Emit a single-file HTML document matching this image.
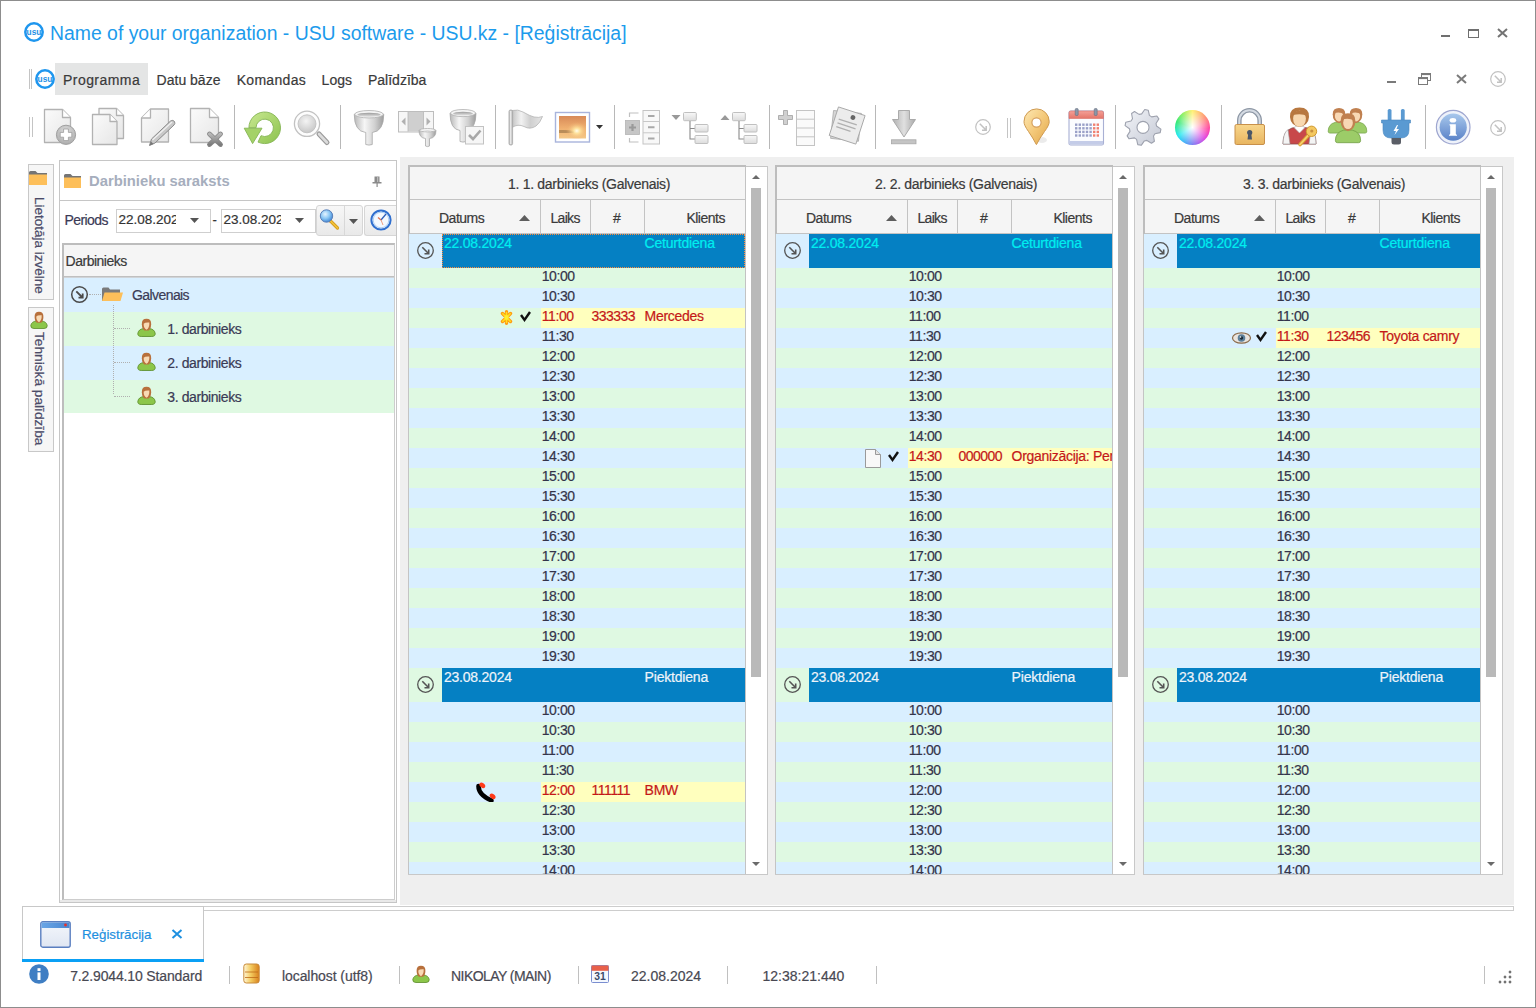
<!DOCTYPE html><html><head><meta charset="utf-8"><style>
html,body{margin:0;padding:0;}
body{width:1536px;height:1008px;overflow:hidden;position:relative;background:#fff;font-family:"Liberation Sans",sans-serif;}
.t{position:absolute;white-space:pre;line-height:1;-webkit-text-stroke:0.2px currentColor;}
.r{position:absolute;}
.s{position:absolute;overflow:visible;}
</style></head><body>
<div class="r" style="left:0;top:0;width:1534px;height:1006px;border:1px solid #8d8d8d;"></div>
<svg class="s" style="left:24px;top:22px;" width="20" height="20" viewBox="0 0 20 20"><circle cx="10.0" cy="10.0" r="8.7" fill="none" stroke="#1e96ee" stroke-width="2.5"/><text x="2.5999999999999996" y="13.2" textLength="14.8" lengthAdjust="spacingAndGlyphs" font-family="Liberation Sans" font-weight="bold" font-size="8.2" fill="#1e90e6">usu</text></svg>
<div class="t" style="left:50px;top:23.57px;font-size:19.4px;color:#1c9bec;font-weight:normal;-webkit-text-stroke:0;">Name of your organization - USU software - USU.kz - [Reģistrācija]</div>
<div class="r" style="left:1441px;top:35px;width:9px;height:2px;background:#6f6f6f;"></div>
<div class="r" style="left:1468px;top:29px;width:9px;height:6px;border:1px solid #6f6f6f;border-top-width:2px;"></div>
<svg class="s" style="left:1497px;top:28px;" width="11" height="10" viewBox="0 0 11 10"><path d="M1 1 L10 9 M10 1 L1 9" stroke="#737373" stroke-width="2"/></svg>
<div class="r" style="left:29px;top:69px;width:1px;height:20px;background:#c4c4c4;"></div>
<div class="r" style="left:31px;top:69px;width:1px;height:20px;background:#c4c4c4;"></div>
<svg class="s" style="left:35px;top:69px;" width="20" height="20" viewBox="0 0 20 20"><circle cx="10.0" cy="10.0" r="8.7" fill="none" stroke="#1e96ee" stroke-width="2.5"/><text x="2.5999999999999996" y="13.2" textLength="14.8" lengthAdjust="spacingAndGlyphs" font-family="Liberation Sans" font-weight="bold" font-size="8.2" fill="#1e90e6">usu</text></svg>
<div class="r" style="left:55px;top:63px;width:93px;height:32px;background:#e4e5e5;"></div>
<div class="t" style="left:63px;top:72.54px;font-size:14px;color:#3a3a3a;font-weight:normal;letter-spacing:0.45px;">Programma</div>
<div class="t" style="left:156.6px;top:72.54px;font-size:14px;color:#3a3a3a;font-weight:normal;">Datu bāze</div>
<div class="t" style="left:236.7px;top:72.54px;font-size:14px;color:#3a3a3a;font-weight:normal;letter-spacing:0.3px;">Komandas</div>
<div class="t" style="left:321.6px;top:72.54px;font-size:14px;color:#3a3a3a;font-weight:normal;">Logs</div>
<div class="t" style="left:368px;top:72.54px;font-size:14px;color:#3a3a3a;font-weight:normal;">Palīdzība</div>
<div class="r" style="left:1387px;top:81px;width:9px;height:2px;background:#7a7a7a;"></div>
<svg class="s" style="left:1418px;top:73px;" width="13" height="12" viewBox="0 0 13 12"><rect x="3.5" y="0.5" width="9" height="7" fill="none" stroke="#7a7a7a" stroke-width="1"/><rect x="3.5" y="0.5" width="9" height="1.6" fill="#7a7a7a"/><rect x="0.5" y="4.5" width="9" height="7" fill="#fff" stroke="#7a7a7a" stroke-width="1"/><rect x="0.5" y="4.5" width="9" height="1.6" fill="#7a7a7a"/></svg>
<svg class="s" style="left:1456px;top:74px;" width="11" height="10" viewBox="0 0 11 10"><path d="M1 1 L10 9 M10 1 L1 9" stroke="#7a7a7a" stroke-width="2"/></svg>
<svg class="s" style="left:1490px;top:71px;" width="16" height="16" viewBox="0 0 16 16"><circle cx="8.0" cy="8.0" r="7.3" fill="none" stroke="#c2c2c2" stroke-width="1.2"/><path d="M4.8 4.8 L11.0 11.0 M11.2 7.0 L11.2 11.2 L7.0 11.2" fill="none" stroke="#c2c2c2" stroke-width="1.5"/></svg>
<div class="r" style="left:29px;top:117px;width:1px;height:20px;background:#c4c4c4;"></div>
<div class="r" style="left:32px;top:117px;width:1px;height:20px;background:#c4c4c4;"></div>
<div class="r" style="left:234px;top:105px;width:1px;height:44px;background:#b8b8b8;"></div>
<div class="r" style="left:340px;top:105px;width:1px;height:44px;background:#b8b8b8;"></div>
<div class="r" style="left:495px;top:105px;width:1px;height:44px;background:#b8b8b8;"></div>
<div class="r" style="left:614px;top:105px;width:1px;height:44px;background:#b8b8b8;"></div>
<div class="r" style="left:769px;top:105px;width:1px;height:44px;background:#b8b8b8;"></div>
<div class="r" style="left:875px;top:105px;width:1px;height:44px;background:#b8b8b8;"></div>
<div class="r" style="left:1115px;top:105px;width:1px;height:44px;background:#b8b8b8;"></div>
<div class="r" style="left:1221px;top:105px;width:1px;height:44px;background:#b8b8b8;"></div>
<div class="r" style="left:1425px;top:105px;width:1px;height:44px;background:#b8b8b8;"></div>
<svg width="0" height="0" style="position:absolute"><defs><linearGradient id="dg" x1="0" y1="0" x2="1" y2="1"><stop offset="0" stop-color="#fbfbfb"/><stop offset="1" stop-color="#e6e6e6"/></linearGradient><radialGradient id="gg" cx="0.5" cy="0.35" r="0.7"><stop offset="0" stop-color="#e0e0e0"/><stop offset="1" stop-color="#a8a8a8"/></radialGradient><linearGradient id="xg" x1="0" y1="0" x2="0" y2="1"><stop offset="0" stop-color="#b8b8b8"/><stop offset="1" stop-color="#7c7c7c"/></linearGradient></defs></svg>
<svg class="s" style="left:40px;top:104px;" width="40" height="44" viewBox="0 0 40 44"><path d="M4.5 5.5 H22.5 L30.5 13.5 V38.5 H4.5 Z" fill="url(#dg)" stroke="#b2b2b2" stroke-width="1.3" stroke-linejoin="round"/><path d="M22.5 5.5 V13.5 H30.5" fill="#fff" stroke="#b2b2b2" stroke-width="1.3" stroke-linejoin="round"/><circle cx="26" cy="30.8" r="9.6" fill="url(#gg)" stroke="#a0a0a0" stroke-width="1"/><path d="M23.6 25 H28.4 V28.4 H31.8 V33.2 H28.4 V36.6 H23.6 V33.2 H20.2 V28.4 H23.6 Z" fill="#fff" stroke="#9a9a9a" stroke-width="0.8"/></svg>
<svg class="s" style="left:88px;top:104px;" width="40" height="44" viewBox="0 0 40 44"><path d="M11 4.5 H28.5 L35.5 11.5 V34.5 H11 Z" fill="url(#dg)" stroke="#b2b2b2" stroke-width="1.3" stroke-linejoin="round"/><path d="M28.5 4.5 V11.5 H35.5" fill="#fff" stroke="#b2b2b2" stroke-width="1.3" stroke-linejoin="round"/><path d="M4.5 10.5 H22.0 L29.0 17.5 V40.5 H4.5 Z" fill="url(#dg)" stroke="#b2b2b2" stroke-width="1.3" stroke-linejoin="round"/><path d="M22.0 10.5 V17.5 H29.0" fill="#fff" stroke="#b2b2b2" stroke-width="1.3" stroke-linejoin="round"/></svg>
<svg class="s" style="left:137px;top:104px;" width="40" height="44" viewBox="0 0 40 44"><path d="M13.5 5 H31.5 V38 H4.5 V14 Z" fill="url(#dg)" stroke="#b2b2b2" stroke-width="1.3" stroke-linejoin="round"/><path d="M13.5 5 V14 H4.5" fill="#fff" stroke="#b2b2b2" stroke-width="1.3" stroke-linejoin="round"/><path d="M12.5 41.5 L14.5 35 L33.5 17 Q36 15.5 37.5 17.5 Q38.5 19.5 37 21 L18 39 Z" fill="#c8c8c8" stroke="#8a8a8a" stroke-width="1"/><path d="M15.5 36 L35 18" stroke="#f0f0f0" stroke-width="1.2"/><path d="M12.5 41.5 L14 37.5 L16.5 40 Z" fill="#777"/></svg>
<svg class="s" style="left:186px;top:104px;" width="40" height="44" viewBox="0 0 40 44"><path d="M4.5 4.5 H23.5 L32.5 13.5 V38.5 H4.5 Z" fill="url(#dg)" stroke="#b2b2b2" stroke-width="1.3" stroke-linejoin="round"/><path d="M23.5 4.5 V13.5 H32.5" fill="#fff" stroke="#b2b2b2" stroke-width="1.3" stroke-linejoin="round"/><path d="M23.5 30 L34.5 40.5 M34.5 30 L23.5 40.5" stroke="#858585" stroke-width="4.8" stroke-linecap="round"/><path d="M23.5 30 L34.5 40.5 M34.5 30 L23.5 40.5" stroke="url(#xg)" stroke-width="3.2" stroke-linecap="round"/></svg>
<svg width="0" height="0" style="position:absolute"><defs><linearGradient id="grn" x1="0" y1="0" x2="1" y2="1"><stop offset="0" stop-color="#c8e890"/><stop offset="1" stop-color="#8cc24e"/></linearGradient><radialGradient id="lens" cx="0.45" cy="0.35" r="0.7"><stop offset="0" stop-color="#f4f4f4"/><stop offset="1" stop-color="#c4c4c4"/></radialGradient><linearGradient id="fun" x1="0" y1="0" x2="1" y2="0"><stop offset="0" stop-color="#b8b8b8"/><stop offset="0.35" stop-color="#f6f6f6"/><stop offset="0.7" stop-color="#d0d0d0"/><stop offset="1" stop-color="#9c9c9c"/></linearGradient><linearGradient id="funin" x1="0" y1="0" x2="0" y2="1"><stop offset="0" stop-color="#9a9a9a"/><stop offset="1" stop-color="#e8e8e8"/></linearGradient></defs></svg>
<svg class="s" style="left:240px;top:104px;" width="44" height="44" viewBox="0 0 44 44"><path d="M8.9 23.8 A15.8 15.8 0 1 1 18 38.1 L21 31.7 A8.7 8.7 0 1 0 16 23.8 Z" fill="url(#grn)" stroke="#84b454" stroke-width="0.9"/><path d="M4.2 24.2 L22 24.2 L12.6 39.6 Z" fill="#a4d268" stroke="#84b454" stroke-width="0.9" stroke-linejoin="round"/></svg>
<svg class="s" style="left:290px;top:104px;" width="44" height="44" viewBox="0 0 44 44"><path d="M29 30 L37 38.5" stroke="#9a9a9a" stroke-width="5" stroke-linecap="round"/><path d="M29 30 L37 38.5" stroke="#dcdcdc" stroke-width="2.6" stroke-linecap="round"/><circle cx="17" cy="19.8" r="12.6" fill="#fdfdfd" stroke="#c2c2c2" stroke-width="1.3"/><circle cx="17" cy="19.8" r="9" fill="url(#lens)" stroke="#bdbdbd" stroke-width="0.8"/></svg>
<svg class="s" style="left:350px;top:104px;" width="40" height="44" viewBox="0 0 40 44"><path d="M4.25 10.24 Q4.25 27.4 15.75 28.5 V40.5 Q19 41.7 22.25 40.5 V28.5 Q33.75 27.4 33.75 10.24 Z" fill="url(#fun)" stroke="#a8a8a8" stroke-width="0.8"/><ellipse cx="19" cy="10.24" rx="14.25" ry="3.74" fill="#f4f4f4" stroke="#b0b0b0" stroke-width="0.8"/><ellipse cx="19" cy="10.84" rx="11.75" ry="2.14" fill="url(#funin)"/></svg>
<svg class="s" style="left:394px;top:104px;" width="46" height="46" viewBox="0 0 46 46"><rect x="4.5" y="7.5" width="35" height="20.5" fill="#f6f6f6" stroke="#bdbdbd" stroke-width="1"/><rect x="14" y="8" width="15.5" height="19.5" fill="#cfcfcf"/><path d="M14 8 V27.5 M29.5 8 V27.5" stroke="#b8b8b8" stroke-width="0.8"/><path d="M11.5 13.5 V21.5 L7.5 17.5 Z" fill="#b0b0b0"/><path d="M32.5 13.5 V21.5 L36.5 17.5 Z" fill="#b0b0b0"/><path d="M25.0 26.2 Q25.0 34.0 31.5 34.5 V42.0 Q33.5 43.2 35.5 42.0 V34.5 Q42.0 34.0 42.0 26.2 Z" fill="url(#fun)" stroke="#a8a8a8" stroke-width="0.8"/><ellipse cx="33.5" cy="26.2" rx="8.0" ry="1.7000000000000002" fill="#f4f4f4" stroke="#b0b0b0" stroke-width="0.8"/><ellipse cx="33.5" cy="26.8" rx="5.5" ry="0.10000000000000009" fill="url(#funin)"/></svg>
<svg class="s" style="left:446px;top:104px;" width="44" height="44" viewBox="0 0 44 44"><path d="M4.0 9.07 Q4.0 25.45 14.0 26.5 V37.5 Q17 38.7 20.0 37.5 V26.5 Q30.0 25.45 30.0 9.07 Z" fill="url(#fun)" stroke="#a8a8a8" stroke-width="0.8"/><ellipse cx="17" cy="9.07" rx="12.5" ry="3.5700000000000003" fill="#f4f4f4" stroke="#b0b0b0" stroke-width="0.8"/><ellipse cx="17" cy="9.67" rx="10.0" ry="1.9700000000000002" fill="url(#funin)"/><rect x="19.5" y="22.5" width="18" height="17.5" fill="#f6f6f6" stroke="#c2c2c2" stroke-width="1"/><path d="M23 31 L27 35 L34.5 26.5" fill="none" stroke="#a8a8a8" stroke-width="2.6"/></svg>
<svg width="0" height="0" style="position:absolute"><defs><linearGradient id="flg" x1="0" y1="0" x2="1" y2="0"><stop offset="0" stop-color="#c4c4c4"/><stop offset="0.3" stop-color="#f2f2f2"/><stop offset="0.6" stop-color="#cfcfcf"/><stop offset="1" stop-color="#e6e6e6"/></linearGradient><linearGradient id="sky" x1="0" y1="0" x2="0" y2="1"><stop offset="0" stop-color="#d88a58"/><stop offset="0.55" stop-color="#f0b070"/><stop offset="1" stop-color="#f4c888"/></linearGradient><radialGradient id="sun" cx="0.66" cy="0.66" r="0.4"><stop offset="0" stop-color="#fffef0"/><stop offset="0.3" stop-color="#ffe6a0" stop-opacity="0.9"/><stop offset="1" stop-color="#f0b070" stop-opacity="0"/></radialGradient><linearGradient id="gbox" x1="0" y1="0" x2="0" y2="1"><stop offset="0" stop-color="#f8f8f8"/><stop offset="1" stop-color="#dcdcdc"/></linearGradient><linearGradient id="garr" x1="0" y1="0" x2="1" y2="0"><stop offset="0" stop-color="#b0b0b0"/><stop offset="0.5" stop-color="#e0e0e0"/><stop offset="1" stop-color="#a8a8a8"/></linearGradient></defs></svg>
<svg class="s" style="left:504px;top:104px;" width="44" height="44" viewBox="0 0 44 44"><path d="M8 6.5 Q14 5 19 8 Q26 12 30 13 Q35 14 38.5 12.5 Q36 19 32 22 Q26 26 20 22.5 Q14 19.5 8 23.5 Z" fill="url(#flg)" stroke="#b4b4b4" stroke-width="0.8"/><rect x="5" y="6" width="3.6" height="35" rx="1.5" fill="#c8c8c8" stroke="#a4a4a4" stroke-width="0.8"/><rect x="6.2" y="7" width="1" height="33" fill="#f0f0f0"/></svg>
<svg class="s" style="left:554px;top:111px;" width="38" height="33" viewBox="0 0 38 33"><rect x="1.5" y="1.5" width="34" height="29.5" fill="#fff" stroke="#a8b4dc" stroke-width="1.4"/><rect x="5" y="5" width="27" height="22.5" fill="url(#sky)"/><path d="M5 19 Q14 18.5 20 20 V22 H5 Z" fill="#8a6a40" opacity="0.55"/><rect x="5" y="5" width="27" height="22.5" fill="url(#sun)"/></svg>
<svg class="s" style="left:596px;top:125px;" width="7" height="4" viewBox="0 0 7 4"><path d="M0 0 H7 L3.5 4 Z" fill="#333"/></svg>
<svg class="s" style="left:622px;top:104px;" width="42" height="44" viewBox="0 0 42 44"><rect x="3.5" y="16.5" width="14" height="14" fill="#c6c6c6" stroke="#b4b4b4" stroke-width="0.8"/><path d="M7 23.5 H14 M10.5 20 V27" stroke="#9a9a9a" stroke-width="2.2"/><path d="M7.5 13 V9 H16.5 M7.5 34 V38 H16.5" fill="none" stroke="#c0c0c0" stroke-width="1.2"/><rect x="21" y="6.5" width="16.5" height="33.5" fill="#f8f8f8" stroke="#c4c4c4" stroke-width="1"/><path d="M21 17.5 H37.5 M21 28.8 H37.5" stroke="#c8c8c8" stroke-width="1"/><path d="M26 12 H32.5 M26 23.2 H32.5 M26 34.4 H32.5" stroke="#a8a8a8" stroke-width="2"/></svg>
<svg class="s" style="left:671px;top:104px;" width="40" height="44" viewBox="0 0 40 44"><g transform="translate(0.5 11)"><path d="M0 0 H9 L4.5 5 Z" fill="#999"/></g><rect x="12.5" y="8.5" width="12.8" height="8.2" rx="1" fill="url(#gbox)" stroke="#c0c0c0" stroke-width="1"/><path d="M19 17 V35 H24 M19 24.5 H24" fill="none" stroke="#8a8a8a" stroke-width="1.1"/><rect x="24" y="20.5" width="13" height="7.5" rx="1" fill="url(#gbox)" stroke="#c0c0c0" stroke-width="1"/><rect x="24" y="31.5" width="13" height="8" rx="1" fill="url(#gbox)" stroke="#c0c0c0" stroke-width="1"/></svg>
<svg class="s" style="left:720px;top:104px;" width="40" height="44" viewBox="0 0 40 44"><g transform="translate(0.5 11)"><path d="M0 5 H9 L4.5 0 Z" fill="#999"/></g><rect x="12.5" y="8.5" width="12.8" height="8.2" rx="1" fill="url(#gbox)" stroke="#c0c0c0" stroke-width="1"/><path d="M19 17 V35 H24 M19 24.5 H24" fill="none" stroke="#8a8a8a" stroke-width="1.1"/><rect x="24" y="20.5" width="13" height="7.5" rx="1" fill="url(#gbox)" stroke="#c0c0c0" stroke-width="1"/><rect x="24" y="31.5" width="13" height="8" rx="1" fill="url(#gbox)" stroke="#c0c0c0" stroke-width="1"/></svg>
<svg class="s" style="left:776px;top:104px;" width="42" height="44" viewBox="0 0 42 44"><path d="M7.5 6.5 H11.5 V11.5 H16.5 V15.5 H11.5 V20.5 H7.5 V15.5 H2.5 V11.5 H7.5 Z" fill="#d0d0d0" stroke="#a8a8a8" stroke-width="0.9"/><rect x="20.5" y="6.5" width="18" height="35" fill="#fafafa" stroke="#c4c4c4" stroke-width="1"/><path d="M20.5 15.2 H38.5 M20.5 24 H38.5 M20.5 32.8 H38.5" stroke="#c4c4c4" stroke-width="1"/></svg>
<svg class="s" style="left:826px;top:104px;" width="42" height="44" viewBox="0 0 42 44"><g transform="rotate(6 21 22)"><rect x="6" y="8" width="28" height="28" fill="#d6d6d6" stroke="#aaa" stroke-width="0.8"/></g><g transform="rotate(18 21 22)"><rect x="7" y="6.5" width="28" height="30" fill="#ececec" stroke="#a8a8a8" stroke-width="0.9"/><path d="M11 18 H30 M11 22 H30 M11 26 H26" stroke="#b0b0b0" stroke-width="1.3"/><circle cx="24" cy="12" r="2.4" fill="#666"/></g></svg>
<svg class="s" style="left:888px;top:104px;" width="32" height="44" viewBox="0 0 32 44"><path d="M10.5 6.5 H21.5 V15.5 H27.5 L16 33 L4.5 15.5 H10.5 Z" fill="url(#garr)" stroke="#a4a4a4" stroke-width="0.9" stroke-linejoin="round"/><rect x="3.5" y="35.8" width="24.5" height="4" fill="#c4c4c4" stroke="#a8a8a8" stroke-width="0.8"/></svg>
<svg width="0" height="0" style="position:absolute"><defs><linearGradient id="gold" x1="0" y1="0" x2="1" y2="1"><stop offset="0" stop-color="#fde8b4"/><stop offset="0.5" stop-color="#f4c97a"/><stop offset="1" stop-color="#e0a448"/></linearGradient><linearGradient id="lockg" x1="0" y1="0" x2="0" y2="1"><stop offset="0" stop-color="#f8d68c"/><stop offset="1" stop-color="#e8b560"/></linearGradient><linearGradient id="gear" x1="0" y1="0" x2="1" y2="1"><stop offset="0" stop-color="#f2f4f8"/><stop offset="1" stop-color="#c4c8d4"/></linearGradient><radialGradient id="wheelw" cx="0.5" cy="0.5" r="0.5"><stop offset="0" stop-color="#fff" stop-opacity="1"/><stop offset="0.25" stop-color="#fff" stop-opacity="0.8"/><stop offset="1" stop-color="#fff" stop-opacity="0"/></radialGradient><linearGradient id="infog" x1="0" y1="0" x2="0" y2="1"><stop offset="0" stop-color="#a8c8ec"/><stop offset="1" stop-color="#5a82c8"/></linearGradient><linearGradient id="calb" x1="0" y1="0" x2="0" y2="1"><stop offset="0" stop-color="#f4a098"/><stop offset="1" stop-color="#e47468"/></linearGradient></defs></svg>
<svg class="s" style="left:975px;top:119px;" width="16" height="16" viewBox="0 0 16 16"><circle cx="8.0" cy="8.0" r="7.3" fill="none" stroke="#c2c2c2" stroke-width="1.2"/><path d="M4.8 4.8 L11.0 11.0 M11.2 7.0 L11.2 11.2 L7.0 11.2" fill="none" stroke="#c2c2c2" stroke-width="1.5"/></svg>
<div class="r" style="left:1007px;top:118px;width:1px;height:20px;background:#c4c4c4;"></div>
<div class="r" style="left:1010px;top:118px;width:1px;height:20px;background:#c4c4c4;"></div>
<svg class="s" style="left:1020px;top:104px;" width="40" height="44" viewBox="0 0 40 44"><ellipse cx="22" cy="36" rx="5" ry="3" fill="#000" opacity="0.08"/><path d="M16.3 40.5 Q13 34 8.5 27.5 Q3.8 21 4 17.5 A12.6 12.6 0 0 1 29.2 17.5 Q29.4 21 24.5 27.5 Q19.8 34 16.5 40.5 Z" fill="url(#gold)" stroke="#cf9a50" stroke-width="1"/><circle cx="16.5" cy="18.5" r="4.6" fill="#fff" stroke="#d6a060" stroke-width="1.2"/></svg>
<svg class="s" style="left:1068px;top:104px;" width="38" height="44" viewBox="0 0 38 44"><rect x="1" y="7" width="34.5" height="34" rx="1.8" fill="#fbfcff" stroke="#a8b0d4" stroke-width="1.1"/><path d="M1 8.8 Q1 7 2.8 7 H33.7 Q35.5 7 35.5 8.8 V14.5 H1 Z" fill="url(#calb)" stroke="#d87068" stroke-width="0.6"/><rect x="1.5" y="37" width="33.5" height="3.5" fill="#c4cce8"/><rect x="7.2" y="4.5" width="3" height="7" rx="1" fill="#8a96a8" stroke="#5a6678" stroke-width="0.5"/><rect x="26.2" y="4.5" width="3" height="7" rx="1" fill="#8a96a8" stroke="#5a6678" stroke-width="0.5"/><rect x="7.0" y="19.5" width="2.4" height="2.4" fill="#9aa0c8"/><rect x="10.6" y="19.5" width="2.4" height="2.4" fill="#9aa0c8"/><rect x="14.2" y="19.5" width="2.4" height="2.4" fill="#9aa0c8"/><rect x="17.8" y="19.5" width="2.4" height="2.4" fill="#9aa0c8"/><rect x="21.4" y="19.5" width="2.4" height="2.4" fill="#9aa0c8"/><rect x="25.0" y="19.5" width="2.4" height="2.4" fill="#f08070"/><rect x="28.6" y="19.5" width="2.4" height="2.4" fill="#f08070"/><rect x="7.0" y="23.1" width="2.4" height="2.4" fill="#9aa0c8"/><rect x="10.6" y="23.1" width="2.4" height="2.4" fill="#9aa0c8"/><rect x="14.2" y="23.1" width="2.4" height="2.4" fill="#9aa0c8"/><rect x="17.8" y="23.1" width="2.4" height="2.4" fill="#9aa0c8"/><rect x="21.4" y="23.1" width="2.4" height="2.4" fill="#9aa0c8"/><rect x="25.0" y="23.1" width="2.4" height="2.4" fill="#f08070"/><rect x="28.6" y="23.1" width="2.4" height="2.4" fill="#f08070"/><rect x="7.0" y="26.7" width="2.4" height="2.4" fill="#9aa0c8"/><rect x="10.6" y="26.7" width="2.4" height="2.4" fill="#9aa0c8"/><rect x="14.2" y="26.7" width="2.4" height="2.4" fill="#9aa0c8"/><rect x="17.8" y="26.7" width="2.4" height="2.4" fill="#9aa0c8"/><rect x="21.4" y="26.7" width="2.4" height="2.4" fill="#9aa0c8"/><rect x="25.0" y="26.7" width="2.4" height="2.4" fill="#f08070"/><rect x="28.6" y="26.7" width="2.4" height="2.4" fill="#f08070"/><rect x="7.0" y="30.3" width="2.4" height="2.4" fill="#9aa0c8"/><rect x="10.6" y="30.3" width="2.4" height="2.4" fill="#9aa0c8"/><rect x="14.2" y="30.3" width="2.4" height="2.4" fill="#9aa0c8"/><rect x="17.8" y="30.3" width="2.4" height="2.4" fill="#9aa0c8"/><rect x="21.4" y="30.3" width="2.4" height="2.4" fill="#9aa0c8"/><rect x="25.0" y="30.3" width="2.4" height="2.4" fill="#f08070"/><rect x="28.6" y="30.3" width="2.4" height="2.4" fill="#f08070"/></svg>
<svg class="s" style="left:1123px;top:104px;" width="40" height="44" viewBox="0 0 40 44"><polygon points="18.67,9.87 21.76,5.49 25.23,6.18 26.41,11.41 28.63,12.89 33.91,11.98 35.87,14.91 33.01,19.45 33.53,22.07 37.91,25.16 37.22,28.63 31.99,29.81 30.51,32.03 31.42,37.31 28.49,39.27 23.95,36.41 21.33,36.93 18.24,41.31 14.77,40.62 13.59,35.39 11.37,33.91 6.09,34.82 4.13,31.89 6.99,27.35 6.47,24.73 2.09,21.64 2.78,18.17 8.01,16.99 9.49,14.77 8.58,9.49 11.51,7.53 16.05,10.39" fill="url(#gear)" stroke="#9ea2ae" stroke-width="1.1" stroke-linejoin="round"/><circle cx="20" cy="23.4" r="6" fill="#fff" stroke="#9ea2ae" stroke-width="1.1"/></svg>
<div class="r" style="left:1174.5px;top:109.6px;width:35.5px;height:35.5px;border-radius:50%;background:conic-gradient(from 0deg,#fff070,#ff9070 50deg,#ff40a0 95deg,#e040e0 130deg,#9070f0 170deg,#40b0f8 210deg,#20e8f0 240deg,#30e870 290deg,#90f060 325deg,#fff070);"></div>
<div class="r" style="left:1174.5px;top:109.6px;width:35.5px;height:35.5px;border-radius:50%;background:radial-gradient(circle,#fff 0%,rgba(255,255,255,0.8) 15%,rgba(255,255,255,0) 70%);"></div>
<svg class="s" style="left:1232px;top:104px;" width="36" height="44" viewBox="0 0 36 44"><path d="M7.3 22 V16.5 A10.2 10.2 0 0 1 27.7 16.5 V22" fill="none" stroke="#8c96a4" stroke-width="4.6"/><path d="M7.3 22 V16.5 A10.2 10.2 0 0 1 27.7 16.5 V22" fill="none" stroke="#d4dae2" stroke-width="2"/><rect x="3" y="20.5" width="29.5" height="20" rx="1.5" fill="url(#lockg)" stroke="#c8904a" stroke-width="1"/><circle cx="17.7" cy="28.5" r="2.6" fill="#4a5668"/><path d="M16.3 29 L15.5 35.5 H20 L19.2 29 Z" fill="#4a5668"/></svg>
<svg class="s" style="left:1280px;top:104px;" width="40" height="44" viewBox="0 0 40 44"><path d="M3 40 Q3 27 12 24 L20 23 L28 24 Q36 27 36 40 Z" fill="#c8484a" stroke="#8a4a4a" stroke-width="0.8"/><path d="M3 40 Q3 29 8 25.5 L10 40 Z" fill="#f4f4f4" stroke="#999" stroke-width="0.6"/><path d="M36 40 Q36 29 31 25.5 L29 40 Z" fill="#f4f4f4" stroke="#999" stroke-width="0.6"/><path d="M14 23.5 L19.5 29 L25 23.5 L22 22 H17 Z" fill="#fff" stroke="#aaa" stroke-width="0.6"/><path d="M10 13 Q9.5 3.5 19.5 3.5 Q29.5 3.5 29 13 Q28.5 21 19.5 23 Q10.5 21 10 13 Z" fill="#b87840"/><ellipse cx="19.5" cy="14.8" rx="6.4" ry="8" fill="#f8d8b0"/><path d="M12.5 11 Q15 5.5 23 7 Q27 8 27 12 Q22 9 12.5 11 Z" fill="#b87840"/><path d="M20 40.5 L29.5 30" stroke="#d8a030" stroke-width="3.6" stroke-linecap="round"/><path d="M20 40.5 L29.5 30" stroke="#f8d070" stroke-width="1.8" stroke-linecap="round"/><circle cx="31.5" cy="27.3" r="5.2" fill="#f4c860" stroke="#d09a30" stroke-width="1"/><circle cx="31.8" cy="27" r="1.6" fill="#c89040"/></svg>
<svg class="s" style="left:1326px;top:104px;" width="44" height="44" viewBox="0 0 44 44"><g transform="translate(13 16.5) scale(0.9)"><path d="M-12 12 Q-12 4 -4 2 H4 Q12 4 12 12 Q12 14 10 14 H-10 Q-12 14 -12 12 Z" fill="#9ccc68" stroke="#74a048" stroke-width="0.8"/><path d="M-7 -7 Q-7 -14 0 -14 Q7 -14 7 -7 Q7 1 0 3 Q-7 1 -7 -7 Z" fill="#c08050"/><ellipse cx="0" cy="-5" rx="4.6" ry="6" fill="#f8d8b4"/><path d="M-6 -8 Q-3 -13 5 -11 Q6.5 -9 6 -7 Q1 -10 -6 -8 Z" fill="#c08050"/></g><g transform="translate(30 16.5) scale(0.9)"><path d="M-12 12 Q-12 4 -4 2 H4 Q12 4 12 12 Q12 14 10 14 H-10 Q-12 14 -12 12 Z" fill="#9ccc68" stroke="#74a048" stroke-width="0.8"/><path d="M-7 -7 Q-7 -14 0 -14 Q7 -14 7 -7 Q7 1 0 3 Q-7 1 -7 -7 Z" fill="#c08050"/><ellipse cx="0" cy="-5" rx="4.6" ry="6" fill="#f8d8b4"/><path d="M-6 -8 Q-3 -13 5 -11 Q6.5 -9 6 -7 Q1 -10 -6 -8 Z" fill="#c08050"/></g><g transform="translate(22 24) scale(1.05)"><path d="M-12 12 Q-12 4 -4 2 H4 Q12 4 12 12 Q12 14 10 14 H-10 Q-12 14 -12 12 Z" fill="#9ccc68" stroke="#74a048" stroke-width="0.8"/><path d="M-7 -7 Q-7 -14 0 -14 Q7 -14 7 -7 Q7 1 0 3 Q-7 1 -7 -7 Z" fill="#c08050"/><ellipse cx="0" cy="-5" rx="4.6" ry="6" fill="#f8d8b4"/><path d="M-6 -8 Q-3 -13 5 -11 Q6.5 -9 6 -7 Q1 -10 -6 -8 Z" fill="#c08050"/></g></svg>
<svg class="s" style="left:1380px;top:104px;" width="32" height="44" viewBox="0 0 32 44"><rect x="7.7" y="5" width="3.8" height="12" rx="1.6" fill="#5a9ad2"/><rect x="20.9" y="5" width="3.8" height="12" rx="1.6" fill="#5a9ad2"/><path d="M1.5 16 H30.5 V19 H29 V26 Q29 34 21 34 H11 Q3 34 3 26 V19 H1.5 Z" fill="#5a9ad2" stroke="#4a88c0" stroke-width="0.6"/><path d="M17 21 L13.5 27 H16 L14.5 31 L19 25 H16.5 L18 21 Z" fill="#fff"/><path d="M11.5 34 H21 V38 Q21 40.5 18.5 40.5 H14 Q11.5 40.5 11.5 38 Z" fill="#5a5e66"/></svg>
<svg class="s" style="left:1434px;top:104px;" width="40" height="44" viewBox="0 0 40 44"><circle cx="19.2" cy="23.2" r="16.8" fill="#eef2fa" stroke="#9ea6d0" stroke-width="1.2"/><circle cx="19.2" cy="23.2" r="13.6" fill="url(#infog)"/><ellipse cx="18.9" cy="16.2" rx="3.3" ry="2.3" fill="#fff"/><path d="M15.5 20.2 H21.8 V29.6 Q21.8 30.8 23 30.8 V31.8 H15 V30.8 Q16.2 30.8 16.2 29.6 V22 Q16.2 21.2 15.5 21.2 Z" fill="#fff"/></svg>
<svg class="s" style="left:1490px;top:120px;" width="16" height="16" viewBox="0 0 16 16"><circle cx="8.0" cy="8.0" r="7.3" fill="none" stroke="#c2c2c2" stroke-width="1.2"/><path d="M4.8 4.8 L11.0 11.0 M11.2 7.0 L11.2 11.2 L7.0 11.2" fill="none" stroke="#c2c2c2" stroke-width="1.5"/></svg>
<div class="r" style="left:400px;top:157px;width:1114px;height:748px;background:#efefef;"></div>
<div class="r" style="left:408px;top:166px;width:360px;height:709px;background:#fff;"></div>
<div class="r" style="left:408px;top:165px;width:2px;height:69px;background:#bdbdbd;"></div>
<div class="r" style="left:408px;top:234px;width:1px;height:641px;background:#c4c4c4;"></div>
<div class="r" style="left:408px;top:165px;width:338px;height:2px;background:#bdbdbd;"></div>
<div class="r" style="left:746px;top:165.5px;width:22px;height:1.5px;background:#c6c6c6;"></div>
<div class="r" style="left:767px;top:166px;width:1px;height:709px;background:#c8c8c8;"></div>
<div class="r" style="left:410px;top:167px;width:335px;height:32px;background:#f5f5f5;"></div>
<div class="r" style="left:410px;top:199px;width:335px;height:1px;background:#c3c3c3;"></div>
<div class="r" style="left:410px;top:200px;width:335px;height:33px;background:#f5f5f5;"></div>
<div class="r" style="left:410px;top:233px;width:335px;height:1px;background:#c3c3c3;"></div>
<div class="r" style="left:540px;top:200px;width:1px;height:33px;background:#c3c3c3;"></div>
<div class="r" style="left:590px;top:200px;width:1px;height:33px;background:#c3c3c3;"></div>
<div class="r" style="left:644px;top:200px;width:1px;height:33px;background:#c3c3c3;"></div>
<div class="t" style="left:508px;top:176.54px;font-size:14px;color:#3a3a3a;font-weight:normal;letter-spacing:-0.3px;">1. 1. darbinieks (Galvenais)</div>
<div class="t" style="left:439px;top:210.74px;font-size:14px;color:#3a3a3a;font-weight:normal;letter-spacing:-0.5px;">Datums</div>
<svg class="s" style="left:519px;top:215px;" width="11" height="6" viewBox="0 0 11 6"><path d="M0 6 L5.5 0 L11 6 Z" fill="#5e5e5e"/></svg>
<div class="t" style="left:550.5px;top:210.74px;font-size:14px;color:#3a3a3a;font-weight:normal;letter-spacing:-0.7px;">Laiks</div>
<div class="t" style="left:613px;top:210.74px;font-size:14px;color:#3a3a3a;font-weight:normal;">#</div>
<div class="t" style="left:686.4px;top:210.74px;font-size:14px;color:#3a3a3a;font-weight:normal;letter-spacing:-0.5px;">Klients</div>
<div class="r" style="left:409px;top:234px;width:336px;height:640px;overflow:hidden;"><div class="r" style="left:1px;top:0;width:335px;height:640px;">
<div class="r" style="left:-1px;top:0px;width:336px;height:34px;background:#d9efff;"></div>
<div class="r" style="left:32px;top:0px;width:303px;height:34px;background:#0580c3;"></div>
<div class="r" style="left:32px;top:0px;width:301px;height:32px;border:1px dotted #ff8a3a;"></div>
<svg class="s" style="left:7px;top:8px;" width="17" height="17" viewBox="0 0 17 17"><circle cx="8.5" cy="8.5" r="7.8" fill="none" stroke="#555" stroke-width="1.3"/><path d="M5.3 5.3 L11.5 11.5 M11.7 7.5 L11.7 11.7 L7.5 11.7" fill="none" stroke="#555" stroke-width="1.6"/></svg>
<div class="t" style="left:33.9px;top:1.94px;font-size:14px;color:#00eef0;font-weight:normal;letter-spacing:-0.22px;">22.08.2024</div>
<div class="t" style="left:234.6px;top:1.94px;font-size:14px;color:#00eef0;font-weight:normal;letter-spacing:-0.2px;">Ceturtdiena</div>
<div class="r" style="left:-1px;top:34px;width:336px;height:20px;background:#dff9e2;"></div>
<div class="t" style="left:131.7px;top:35.24px;font-size:14px;color:#34344a;font-weight:normal;letter-spacing:-0.4px;">10:00</div>
<div class="r" style="left:-1px;top:54px;width:336px;height:20px;background:#d9efff;"></div>
<div class="t" style="left:131.7px;top:55.24px;font-size:14px;color:#34344a;font-weight:normal;letter-spacing:-0.4px;">10:30</div>
<div class="r" style="left:-1px;top:74px;width:336px;height:20px;background:#dff9e2;"></div>
<div class="r" style="left:131px;top:74px;width:204px;height:20px;background:#ffffbe;"></div>
<div class="t" style="left:131.7px;top:75.24px;font-size:14px;color:#c41818;font-weight:normal;letter-spacing:-0.4px;">11:00</div>
<div class="t" style="left:181.4px;top:75.24px;font-size:14px;color:#c41818;font-weight:normal;letter-spacing:-0.5px;">333333</div>
<div class="t" style="left:234.6px;top:75.24px;font-size:14px;color:#c41818;font-weight:normal;letter-spacing:-0.3px;">Mercedes</div>
<svg class="s" style="left:90px;top:77px;" width="13" height="13" viewBox="0 0 13 13"><path d="M2.5 2.5 L10.5 10.5 M10.5 2.5 L2.5 10.5 M6.5 0.8 V12.2" stroke="#ff9a10" stroke-width="3.4" stroke-linecap="round"/><path d="M2.8 2.8 L10.2 10.2 M10.2 2.8 L2.8 10.2 M6.5 1.5 V11.5" stroke="#ffe020" stroke-width="1.6" stroke-linecap="round"/><circle cx="6.5" cy="6.5" r="2.2" fill="#fff030"/></svg>
<svg class="s" style="left:110px;top:77px;" width="11" height="11" viewBox="0 0 11 11"><path d="M1 4 L4.5 9 L10 1" fill="none" stroke="#111" stroke-width="2.4" stroke-linejoin="miter"/></svg>
<div class="r" style="left:-1px;top:94px;width:336px;height:20px;background:#d9efff;"></div>
<div class="t" style="left:131.7px;top:95.24px;font-size:14px;color:#34344a;font-weight:normal;letter-spacing:-0.4px;">11:30</div>
<div class="r" style="left:-1px;top:114px;width:336px;height:20px;background:#dff9e2;"></div>
<div class="t" style="left:131.7px;top:115.24px;font-size:14px;color:#34344a;font-weight:normal;letter-spacing:-0.4px;">12:00</div>
<div class="r" style="left:-1px;top:134px;width:336px;height:20px;background:#d9efff;"></div>
<div class="t" style="left:131.7px;top:135.24px;font-size:14px;color:#34344a;font-weight:normal;letter-spacing:-0.4px;">12:30</div>
<div class="r" style="left:-1px;top:154px;width:336px;height:20px;background:#dff9e2;"></div>
<div class="t" style="left:131.7px;top:155.24px;font-size:14px;color:#34344a;font-weight:normal;letter-spacing:-0.4px;">13:00</div>
<div class="r" style="left:-1px;top:174px;width:336px;height:20px;background:#d9efff;"></div>
<div class="t" style="left:131.7px;top:175.24px;font-size:14px;color:#34344a;font-weight:normal;letter-spacing:-0.4px;">13:30</div>
<div class="r" style="left:-1px;top:194px;width:336px;height:20px;background:#dff9e2;"></div>
<div class="t" style="left:131.7px;top:195.24px;font-size:14px;color:#34344a;font-weight:normal;letter-spacing:-0.4px;">14:00</div>
<div class="r" style="left:-1px;top:214px;width:336px;height:20px;background:#d9efff;"></div>
<div class="t" style="left:131.7px;top:215.24px;font-size:14px;color:#34344a;font-weight:normal;letter-spacing:-0.4px;">14:30</div>
<div class="r" style="left:-1px;top:234px;width:336px;height:20px;background:#dff9e2;"></div>
<div class="t" style="left:131.7px;top:235.24px;font-size:14px;color:#34344a;font-weight:normal;letter-spacing:-0.4px;">15:00</div>
<div class="r" style="left:-1px;top:254px;width:336px;height:20px;background:#d9efff;"></div>
<div class="t" style="left:131.7px;top:255.24px;font-size:14px;color:#34344a;font-weight:normal;letter-spacing:-0.4px;">15:30</div>
<div class="r" style="left:-1px;top:274px;width:336px;height:20px;background:#dff9e2;"></div>
<div class="t" style="left:131.7px;top:275.24px;font-size:14px;color:#34344a;font-weight:normal;letter-spacing:-0.4px;">16:00</div>
<div class="r" style="left:-1px;top:294px;width:336px;height:20px;background:#d9efff;"></div>
<div class="t" style="left:131.7px;top:295.24px;font-size:14px;color:#34344a;font-weight:normal;letter-spacing:-0.4px;">16:30</div>
<div class="r" style="left:-1px;top:314px;width:336px;height:20px;background:#dff9e2;"></div>
<div class="t" style="left:131.7px;top:315.24px;font-size:14px;color:#34344a;font-weight:normal;letter-spacing:-0.4px;">17:00</div>
<div class="r" style="left:-1px;top:334px;width:336px;height:20px;background:#d9efff;"></div>
<div class="t" style="left:131.7px;top:335.24px;font-size:14px;color:#34344a;font-weight:normal;letter-spacing:-0.4px;">17:30</div>
<div class="r" style="left:-1px;top:354px;width:336px;height:20px;background:#dff9e2;"></div>
<div class="t" style="left:131.7px;top:355.24px;font-size:14px;color:#34344a;font-weight:normal;letter-spacing:-0.4px;">18:00</div>
<div class="r" style="left:-1px;top:374px;width:336px;height:20px;background:#d9efff;"></div>
<div class="t" style="left:131.7px;top:375.24px;font-size:14px;color:#34344a;font-weight:normal;letter-spacing:-0.4px;">18:30</div>
<div class="r" style="left:-1px;top:394px;width:336px;height:20px;background:#dff9e2;"></div>
<div class="t" style="left:131.7px;top:395.24px;font-size:14px;color:#34344a;font-weight:normal;letter-spacing:-0.4px;">19:00</div>
<div class="r" style="left:-1px;top:414px;width:336px;height:20px;background:#d9efff;"></div>
<div class="t" style="left:131.7px;top:415.24px;font-size:14px;color:#34344a;font-weight:normal;letter-spacing:-0.4px;">19:30</div>
<div class="r" style="left:-1px;top:434px;width:336px;height:34px;background:#dff9e2;"></div>
<div class="r" style="left:32px;top:434px;width:303px;height:34px;background:#0580c3;"></div>
<svg class="s" style="left:7px;top:442px;" width="17" height="17" viewBox="0 0 17 17"><circle cx="8.5" cy="8.5" r="7.8" fill="none" stroke="#555" stroke-width="1.3"/><path d="M5.3 5.3 L11.5 11.5 M11.7 7.5 L11.7 11.7 L7.5 11.7" fill="none" stroke="#555" stroke-width="1.6"/></svg>
<div class="t" style="left:33.9px;top:435.94px;font-size:14px;color:#eef4fa;font-weight:normal;letter-spacing:-0.22px;">23.08.2024</div>
<div class="t" style="left:234.6px;top:435.94px;font-size:14px;color:#eef4fa;font-weight:normal;letter-spacing:-0.2px;">Piektdiena</div>
<div class="r" style="left:-1px;top:468px;width:336px;height:20px;background:#d9efff;"></div>
<div class="t" style="left:131.7px;top:469.24px;font-size:14px;color:#34344a;font-weight:normal;letter-spacing:-0.4px;">10:00</div>
<div class="r" style="left:-1px;top:488px;width:336px;height:20px;background:#dff9e2;"></div>
<div class="t" style="left:131.7px;top:489.24px;font-size:14px;color:#34344a;font-weight:normal;letter-spacing:-0.4px;">10:30</div>
<div class="r" style="left:-1px;top:508px;width:336px;height:20px;background:#d9efff;"></div>
<div class="t" style="left:131.7px;top:509.24px;font-size:14px;color:#34344a;font-weight:normal;letter-spacing:-0.4px;">11:00</div>
<div class="r" style="left:-1px;top:528px;width:336px;height:20px;background:#dff9e2;"></div>
<div class="t" style="left:131.7px;top:529.24px;font-size:14px;color:#34344a;font-weight:normal;letter-spacing:-0.4px;">11:30</div>
<div class="r" style="left:-1px;top:548px;width:336px;height:20px;background:#d9efff;"></div>
<div class="r" style="left:131px;top:548px;width:204px;height:20px;background:#ffffbe;"></div>
<div class="t" style="left:131.7px;top:549.24px;font-size:14px;color:#c41818;font-weight:normal;letter-spacing:-0.4px;">12:00</div>
<div class="t" style="left:181.4px;top:549.24px;font-size:14px;color:#c41818;font-weight:normal;letter-spacing:-0.5px;">111111</div>
<div class="t" style="left:234.6px;top:549.24px;font-size:14px;color:#c41818;font-weight:normal;letter-spacing:-0.3px;">BMW</div>
<svg class="s" style="left:55px;top:541px;" width="34" height="30" viewBox="0 0 34 30"><path d="M13.5 11 Q13.5 20 26.5 25.5" fill="none" stroke="#000" stroke-width="4.6" stroke-linecap="round"/><ellipse cx="17.3" cy="10.3" rx="3.3" ry="2.2" transform="rotate(40 17.3 10.3)" fill="#ff3a1a"/><ellipse cx="27.6" cy="21.3" rx="3.3" ry="2.2" transform="rotate(40 27.6 21.3)" fill="#ff3a1a"/></svg>
<div class="r" style="left:-1px;top:568px;width:336px;height:20px;background:#dff9e2;"></div>
<div class="t" style="left:131.7px;top:569.24px;font-size:14px;color:#34344a;font-weight:normal;letter-spacing:-0.4px;">12:30</div>
<div class="r" style="left:-1px;top:588px;width:336px;height:20px;background:#d9efff;"></div>
<div class="t" style="left:131.7px;top:589.24px;font-size:14px;color:#34344a;font-weight:normal;letter-spacing:-0.4px;">13:00</div>
<div class="r" style="left:-1px;top:608px;width:336px;height:20px;background:#dff9e2;"></div>
<div class="t" style="left:131.7px;top:609.24px;font-size:14px;color:#34344a;font-weight:normal;letter-spacing:-0.4px;">13:30</div>
<div class="r" style="left:-1px;top:628px;width:336px;height:20px;background:#d9efff;"></div>
<div class="t" style="left:131.7px;top:629.24px;font-size:14px;color:#34344a;font-weight:normal;letter-spacing:-0.4px;">14:00</div>
</div></div>
<div class="r" style="left:408px;top:874px;width:360px;height:1px;background:#c8c8c8;"></div>
<div class="r" style="left:745px;top:167px;width:1px;height:707px;background:#c3c3c3;"></div>
<div class="r" style="left:746px;top:167px;width:21px;height:707px;background:#fff;"></div>
<svg class="s" style="left:752px;top:175px;" width="8" height="4" viewBox="0 0 8 4"><path d="M0 4 L4 0 L8 4 Z" fill="#6a6a6a"/></svg>
<div class="r" style="left:751px;top:188px;width:10px;height:489px;background:#b9b9b9;"></div>
<svg class="s" style="left:752px;top:862px;" width="8" height="4" viewBox="0 0 8 4"><path d="M0 0 L4 4 L8 0 Z" fill="#6a6a6a"/></svg>
<div class="r" style="left:775px;top:166px;width:360px;height:709px;background:#fff;"></div>
<div class="r" style="left:775px;top:165px;width:2px;height:69px;background:#bdbdbd;"></div>
<div class="r" style="left:775px;top:234px;width:1px;height:641px;background:#c4c4c4;"></div>
<div class="r" style="left:775px;top:165px;width:338px;height:2px;background:#bdbdbd;"></div>
<div class="r" style="left:1113px;top:165.5px;width:22px;height:1.5px;background:#c6c6c6;"></div>
<div class="r" style="left:1134px;top:166px;width:1px;height:709px;background:#c8c8c8;"></div>
<div class="r" style="left:777px;top:167px;width:335px;height:32px;background:#f5f5f5;"></div>
<div class="r" style="left:777px;top:199px;width:335px;height:1px;background:#c3c3c3;"></div>
<div class="r" style="left:777px;top:200px;width:335px;height:33px;background:#f5f5f5;"></div>
<div class="r" style="left:777px;top:233px;width:335px;height:1px;background:#c3c3c3;"></div>
<div class="r" style="left:907px;top:200px;width:1px;height:33px;background:#c3c3c3;"></div>
<div class="r" style="left:957px;top:200px;width:1px;height:33px;background:#c3c3c3;"></div>
<div class="r" style="left:1011px;top:200px;width:1px;height:33px;background:#c3c3c3;"></div>
<div class="t" style="left:875px;top:176.54px;font-size:14px;color:#3a3a3a;font-weight:normal;letter-spacing:-0.3px;">2. 2. darbinieks (Galvenais)</div>
<div class="t" style="left:806px;top:210.74px;font-size:14px;color:#3a3a3a;font-weight:normal;letter-spacing:-0.5px;">Datums</div>
<svg class="s" style="left:886px;top:215px;" width="11" height="6" viewBox="0 0 11 6"><path d="M0 6 L5.5 0 L11 6 Z" fill="#5e5e5e"/></svg>
<div class="t" style="left:917.5px;top:210.74px;font-size:14px;color:#3a3a3a;font-weight:normal;letter-spacing:-0.7px;">Laiks</div>
<div class="t" style="left:980px;top:210.74px;font-size:14px;color:#3a3a3a;font-weight:normal;">#</div>
<div class="t" style="left:1053.4px;top:210.74px;font-size:14px;color:#3a3a3a;font-weight:normal;letter-spacing:-0.5px;">Klients</div>
<div class="r" style="left:776px;top:234px;width:336px;height:640px;overflow:hidden;"><div class="r" style="left:1px;top:0;width:335px;height:640px;">
<div class="r" style="left:-1px;top:0px;width:336px;height:34px;background:#d9efff;"></div>
<div class="r" style="left:32px;top:0px;width:303px;height:34px;background:#0580c3;"></div>
<svg class="s" style="left:7px;top:8px;" width="17" height="17" viewBox="0 0 17 17"><circle cx="8.5" cy="8.5" r="7.8" fill="none" stroke="#555" stroke-width="1.3"/><path d="M5.3 5.3 L11.5 11.5 M11.7 7.5 L11.7 11.7 L7.5 11.7" fill="none" stroke="#555" stroke-width="1.6"/></svg>
<div class="t" style="left:33.9px;top:1.94px;font-size:14px;color:#00eef0;font-weight:normal;letter-spacing:-0.22px;">22.08.2024</div>
<div class="t" style="left:234.6px;top:1.94px;font-size:14px;color:#00eef0;font-weight:normal;letter-spacing:-0.2px;">Ceturtdiena</div>
<div class="r" style="left:-1px;top:34px;width:336px;height:20px;background:#dff9e2;"></div>
<div class="t" style="left:131.7px;top:35.24px;font-size:14px;color:#34344a;font-weight:normal;letter-spacing:-0.4px;">10:00</div>
<div class="r" style="left:-1px;top:54px;width:336px;height:20px;background:#d9efff;"></div>
<div class="t" style="left:131.7px;top:55.24px;font-size:14px;color:#34344a;font-weight:normal;letter-spacing:-0.4px;">10:30</div>
<div class="r" style="left:-1px;top:74px;width:336px;height:20px;background:#dff9e2;"></div>
<div class="t" style="left:131.7px;top:75.24px;font-size:14px;color:#34344a;font-weight:normal;letter-spacing:-0.4px;">11:00</div>
<div class="r" style="left:-1px;top:94px;width:336px;height:20px;background:#d9efff;"></div>
<div class="t" style="left:131.7px;top:95.24px;font-size:14px;color:#34344a;font-weight:normal;letter-spacing:-0.4px;">11:30</div>
<div class="r" style="left:-1px;top:114px;width:336px;height:20px;background:#dff9e2;"></div>
<div class="t" style="left:131.7px;top:115.24px;font-size:14px;color:#34344a;font-weight:normal;letter-spacing:-0.4px;">12:00</div>
<div class="r" style="left:-1px;top:134px;width:336px;height:20px;background:#d9efff;"></div>
<div class="t" style="left:131.7px;top:135.24px;font-size:14px;color:#34344a;font-weight:normal;letter-spacing:-0.4px;">12:30</div>
<div class="r" style="left:-1px;top:154px;width:336px;height:20px;background:#dff9e2;"></div>
<div class="t" style="left:131.7px;top:155.24px;font-size:14px;color:#34344a;font-weight:normal;letter-spacing:-0.4px;">13:00</div>
<div class="r" style="left:-1px;top:174px;width:336px;height:20px;background:#d9efff;"></div>
<div class="t" style="left:131.7px;top:175.24px;font-size:14px;color:#34344a;font-weight:normal;letter-spacing:-0.4px;">13:30</div>
<div class="r" style="left:-1px;top:194px;width:336px;height:20px;background:#dff9e2;"></div>
<div class="t" style="left:131.7px;top:195.24px;font-size:14px;color:#34344a;font-weight:normal;letter-spacing:-0.4px;">14:00</div>
<div class="r" style="left:-1px;top:214px;width:336px;height:20px;background:#d9efff;"></div>
<div class="r" style="left:131px;top:214px;width:204px;height:20px;background:#ffffbe;"></div>
<div class="t" style="left:131.7px;top:215.24px;font-size:14px;color:#c41818;font-weight:normal;letter-spacing:-0.4px;">14:30</div>
<div class="t" style="left:181.4px;top:215.24px;font-size:14px;color:#c41818;font-weight:normal;letter-spacing:-0.5px;">000000</div>
<div class="t" style="left:234.6px;top:215.24px;font-size:14px;color:#c41818;font-weight:normal;letter-spacing:-0.3px;">Organizācija: Personīgi</div>
<svg class="s" style="left:87px;top:215px;" width="18" height="19" viewBox="0 0 18 19"><path d="M1.5 0.5 H11.5 L16.5 5.5 V18.5 H1.5 Z" fill="#f8f8f8" stroke="#9a9a9a" stroke-width="1"/><path d="M11.5 0.5 V5.5 H16.5" fill="#e4e4e4" stroke="#9a9a9a" stroke-width="1"/></svg>
<svg class="s" style="left:111px;top:217px;" width="11" height="11" viewBox="0 0 11 11"><path d="M1 4 L4.5 9 L10 1" fill="none" stroke="#111" stroke-width="2.4" stroke-linejoin="miter"/></svg>
<div class="r" style="left:-1px;top:234px;width:336px;height:20px;background:#dff9e2;"></div>
<div class="t" style="left:131.7px;top:235.24px;font-size:14px;color:#34344a;font-weight:normal;letter-spacing:-0.4px;">15:00</div>
<div class="r" style="left:-1px;top:254px;width:336px;height:20px;background:#d9efff;"></div>
<div class="t" style="left:131.7px;top:255.24px;font-size:14px;color:#34344a;font-weight:normal;letter-spacing:-0.4px;">15:30</div>
<div class="r" style="left:-1px;top:274px;width:336px;height:20px;background:#dff9e2;"></div>
<div class="t" style="left:131.7px;top:275.24px;font-size:14px;color:#34344a;font-weight:normal;letter-spacing:-0.4px;">16:00</div>
<div class="r" style="left:-1px;top:294px;width:336px;height:20px;background:#d9efff;"></div>
<div class="t" style="left:131.7px;top:295.24px;font-size:14px;color:#34344a;font-weight:normal;letter-spacing:-0.4px;">16:30</div>
<div class="r" style="left:-1px;top:314px;width:336px;height:20px;background:#dff9e2;"></div>
<div class="t" style="left:131.7px;top:315.24px;font-size:14px;color:#34344a;font-weight:normal;letter-spacing:-0.4px;">17:00</div>
<div class="r" style="left:-1px;top:334px;width:336px;height:20px;background:#d9efff;"></div>
<div class="t" style="left:131.7px;top:335.24px;font-size:14px;color:#34344a;font-weight:normal;letter-spacing:-0.4px;">17:30</div>
<div class="r" style="left:-1px;top:354px;width:336px;height:20px;background:#dff9e2;"></div>
<div class="t" style="left:131.7px;top:355.24px;font-size:14px;color:#34344a;font-weight:normal;letter-spacing:-0.4px;">18:00</div>
<div class="r" style="left:-1px;top:374px;width:336px;height:20px;background:#d9efff;"></div>
<div class="t" style="left:131.7px;top:375.24px;font-size:14px;color:#34344a;font-weight:normal;letter-spacing:-0.4px;">18:30</div>
<div class="r" style="left:-1px;top:394px;width:336px;height:20px;background:#dff9e2;"></div>
<div class="t" style="left:131.7px;top:395.24px;font-size:14px;color:#34344a;font-weight:normal;letter-spacing:-0.4px;">19:00</div>
<div class="r" style="left:-1px;top:414px;width:336px;height:20px;background:#d9efff;"></div>
<div class="t" style="left:131.7px;top:415.24px;font-size:14px;color:#34344a;font-weight:normal;letter-spacing:-0.4px;">19:30</div>
<div class="r" style="left:-1px;top:434px;width:336px;height:34px;background:#dff9e2;"></div>
<div class="r" style="left:32px;top:434px;width:303px;height:34px;background:#0580c3;"></div>
<svg class="s" style="left:7px;top:442px;" width="17" height="17" viewBox="0 0 17 17"><circle cx="8.5" cy="8.5" r="7.8" fill="none" stroke="#555" stroke-width="1.3"/><path d="M5.3 5.3 L11.5 11.5 M11.7 7.5 L11.7 11.7 L7.5 11.7" fill="none" stroke="#555" stroke-width="1.6"/></svg>
<div class="t" style="left:33.9px;top:435.94px;font-size:14px;color:#eef4fa;font-weight:normal;letter-spacing:-0.22px;">23.08.2024</div>
<div class="t" style="left:234.6px;top:435.94px;font-size:14px;color:#eef4fa;font-weight:normal;letter-spacing:-0.2px;">Piektdiena</div>
<div class="r" style="left:-1px;top:468px;width:336px;height:20px;background:#d9efff;"></div>
<div class="t" style="left:131.7px;top:469.24px;font-size:14px;color:#34344a;font-weight:normal;letter-spacing:-0.4px;">10:00</div>
<div class="r" style="left:-1px;top:488px;width:336px;height:20px;background:#dff9e2;"></div>
<div class="t" style="left:131.7px;top:489.24px;font-size:14px;color:#34344a;font-weight:normal;letter-spacing:-0.4px;">10:30</div>
<div class="r" style="left:-1px;top:508px;width:336px;height:20px;background:#d9efff;"></div>
<div class="t" style="left:131.7px;top:509.24px;font-size:14px;color:#34344a;font-weight:normal;letter-spacing:-0.4px;">11:00</div>
<div class="r" style="left:-1px;top:528px;width:336px;height:20px;background:#dff9e2;"></div>
<div class="t" style="left:131.7px;top:529.24px;font-size:14px;color:#34344a;font-weight:normal;letter-spacing:-0.4px;">11:30</div>
<div class="r" style="left:-1px;top:548px;width:336px;height:20px;background:#d9efff;"></div>
<div class="t" style="left:131.7px;top:549.24px;font-size:14px;color:#34344a;font-weight:normal;letter-spacing:-0.4px;">12:00</div>
<div class="r" style="left:-1px;top:568px;width:336px;height:20px;background:#dff9e2;"></div>
<div class="t" style="left:131.7px;top:569.24px;font-size:14px;color:#34344a;font-weight:normal;letter-spacing:-0.4px;">12:30</div>
<div class="r" style="left:-1px;top:588px;width:336px;height:20px;background:#d9efff;"></div>
<div class="t" style="left:131.7px;top:589.24px;font-size:14px;color:#34344a;font-weight:normal;letter-spacing:-0.4px;">13:00</div>
<div class="r" style="left:-1px;top:608px;width:336px;height:20px;background:#dff9e2;"></div>
<div class="t" style="left:131.7px;top:609.24px;font-size:14px;color:#34344a;font-weight:normal;letter-spacing:-0.4px;">13:30</div>
<div class="r" style="left:-1px;top:628px;width:336px;height:20px;background:#d9efff;"></div>
<div class="t" style="left:131.7px;top:629.24px;font-size:14px;color:#34344a;font-weight:normal;letter-spacing:-0.4px;">14:00</div>
</div></div>
<div class="r" style="left:775px;top:874px;width:360px;height:1px;background:#c8c8c8;"></div>
<div class="r" style="left:1112px;top:167px;width:1px;height:707px;background:#c3c3c3;"></div>
<div class="r" style="left:1113px;top:167px;width:21px;height:707px;background:#fff;"></div>
<svg class="s" style="left:1119px;top:175px;" width="8" height="4" viewBox="0 0 8 4"><path d="M0 4 L4 0 L8 4 Z" fill="#6a6a6a"/></svg>
<div class="r" style="left:1118px;top:188px;width:10px;height:489px;background:#b9b9b9;"></div>
<svg class="s" style="left:1119px;top:862px;" width="8" height="4" viewBox="0 0 8 4"><path d="M0 0 L4 4 L8 0 Z" fill="#6a6a6a"/></svg>
<div class="r" style="left:1143px;top:166px;width:360px;height:709px;background:#fff;"></div>
<div class="r" style="left:1143px;top:165px;width:2px;height:69px;background:#bdbdbd;"></div>
<div class="r" style="left:1143px;top:234px;width:1px;height:641px;background:#c4c4c4;"></div>
<div class="r" style="left:1143px;top:165px;width:338px;height:2px;background:#bdbdbd;"></div>
<div class="r" style="left:1481px;top:165.5px;width:22px;height:1.5px;background:#c6c6c6;"></div>
<div class="r" style="left:1502px;top:166px;width:1px;height:709px;background:#c8c8c8;"></div>
<div class="r" style="left:1145px;top:167px;width:335px;height:32px;background:#f5f5f5;"></div>
<div class="r" style="left:1145px;top:199px;width:335px;height:1px;background:#c3c3c3;"></div>
<div class="r" style="left:1145px;top:200px;width:335px;height:33px;background:#f5f5f5;"></div>
<div class="r" style="left:1145px;top:233px;width:335px;height:1px;background:#c3c3c3;"></div>
<div class="r" style="left:1275px;top:200px;width:1px;height:33px;background:#c3c3c3;"></div>
<div class="r" style="left:1325px;top:200px;width:1px;height:33px;background:#c3c3c3;"></div>
<div class="r" style="left:1379px;top:200px;width:1px;height:33px;background:#c3c3c3;"></div>
<div class="t" style="left:1243px;top:176.54px;font-size:14px;color:#3a3a3a;font-weight:normal;letter-spacing:-0.3px;">3. 3. darbinieks (Galvenais)</div>
<div class="t" style="left:1174px;top:210.74px;font-size:14px;color:#3a3a3a;font-weight:normal;letter-spacing:-0.5px;">Datums</div>
<svg class="s" style="left:1254px;top:215px;" width="11" height="6" viewBox="0 0 11 6"><path d="M0 6 L5.5 0 L11 6 Z" fill="#5e5e5e"/></svg>
<div class="t" style="left:1285.5px;top:210.74px;font-size:14px;color:#3a3a3a;font-weight:normal;letter-spacing:-0.7px;">Laiks</div>
<div class="t" style="left:1348px;top:210.74px;font-size:14px;color:#3a3a3a;font-weight:normal;">#</div>
<div class="t" style="left:1421.4px;top:210.74px;font-size:14px;color:#3a3a3a;font-weight:normal;letter-spacing:-0.5px;">Klients</div>
<div class="r" style="left:1144px;top:234px;width:336px;height:640px;overflow:hidden;"><div class="r" style="left:1px;top:0;width:335px;height:640px;">
<div class="r" style="left:-1px;top:0px;width:336px;height:34px;background:#d9efff;"></div>
<div class="r" style="left:32px;top:0px;width:303px;height:34px;background:#0580c3;"></div>
<svg class="s" style="left:7px;top:8px;" width="17" height="17" viewBox="0 0 17 17"><circle cx="8.5" cy="8.5" r="7.8" fill="none" stroke="#555" stroke-width="1.3"/><path d="M5.3 5.3 L11.5 11.5 M11.7 7.5 L11.7 11.7 L7.5 11.7" fill="none" stroke="#555" stroke-width="1.6"/></svg>
<div class="t" style="left:33.9px;top:1.94px;font-size:14px;color:#00eef0;font-weight:normal;letter-spacing:-0.22px;">22.08.2024</div>
<div class="t" style="left:234.6px;top:1.94px;font-size:14px;color:#00eef0;font-weight:normal;letter-spacing:-0.2px;">Ceturtdiena</div>
<div class="r" style="left:-1px;top:34px;width:336px;height:20px;background:#dff9e2;"></div>
<div class="t" style="left:131.7px;top:35.24px;font-size:14px;color:#34344a;font-weight:normal;letter-spacing:-0.4px;">10:00</div>
<div class="r" style="left:-1px;top:54px;width:336px;height:20px;background:#d9efff;"></div>
<div class="t" style="left:131.7px;top:55.24px;font-size:14px;color:#34344a;font-weight:normal;letter-spacing:-0.4px;">10:30</div>
<div class="r" style="left:-1px;top:74px;width:336px;height:20px;background:#dff9e2;"></div>
<div class="t" style="left:131.7px;top:75.24px;font-size:14px;color:#34344a;font-weight:normal;letter-spacing:-0.4px;">11:00</div>
<div class="r" style="left:-1px;top:94px;width:336px;height:20px;background:#d9efff;"></div>
<div class="r" style="left:131px;top:94px;width:204px;height:20px;background:#ffffbe;"></div>
<div class="t" style="left:131.7px;top:95.24px;font-size:14px;color:#c41818;font-weight:normal;letter-spacing:-0.4px;">11:30</div>
<div class="t" style="left:181.4px;top:95.24px;font-size:14px;color:#c41818;font-weight:normal;letter-spacing:-0.5px;">123456</div>
<div class="t" style="left:234.6px;top:95.24px;font-size:14px;color:#c41818;font-weight:normal;letter-spacing:-0.3px;">Toyota camry</div>
<svg class="s" style="left:87px;top:98px;" width="19" height="12" viewBox="0 0 19 12"><ellipse cx="9.5" cy="6" rx="9" ry="5.2" fill="#e9e4de" stroke="#8a6a4a" stroke-width="1.2"/><circle cx="9.5" cy="6" r="3.8" fill="#5b7f9a"/><circle cx="9.5" cy="6" r="1.7" fill="#1d2d3a"/><circle cx="8.5" cy="5" r="0.8" fill="#fff"/></svg>
<svg class="s" style="left:111px;top:97px;" width="11" height="11" viewBox="0 0 11 11"><path d="M1 4 L4.5 9 L10 1" fill="none" stroke="#111" stroke-width="2.4" stroke-linejoin="miter"/></svg>
<div class="r" style="left:-1px;top:114px;width:336px;height:20px;background:#dff9e2;"></div>
<div class="t" style="left:131.7px;top:115.24px;font-size:14px;color:#34344a;font-weight:normal;letter-spacing:-0.4px;">12:00</div>
<div class="r" style="left:-1px;top:134px;width:336px;height:20px;background:#d9efff;"></div>
<div class="t" style="left:131.7px;top:135.24px;font-size:14px;color:#34344a;font-weight:normal;letter-spacing:-0.4px;">12:30</div>
<div class="r" style="left:-1px;top:154px;width:336px;height:20px;background:#dff9e2;"></div>
<div class="t" style="left:131.7px;top:155.24px;font-size:14px;color:#34344a;font-weight:normal;letter-spacing:-0.4px;">13:00</div>
<div class="r" style="left:-1px;top:174px;width:336px;height:20px;background:#d9efff;"></div>
<div class="t" style="left:131.7px;top:175.24px;font-size:14px;color:#34344a;font-weight:normal;letter-spacing:-0.4px;">13:30</div>
<div class="r" style="left:-1px;top:194px;width:336px;height:20px;background:#dff9e2;"></div>
<div class="t" style="left:131.7px;top:195.24px;font-size:14px;color:#34344a;font-weight:normal;letter-spacing:-0.4px;">14:00</div>
<div class="r" style="left:-1px;top:214px;width:336px;height:20px;background:#d9efff;"></div>
<div class="t" style="left:131.7px;top:215.24px;font-size:14px;color:#34344a;font-weight:normal;letter-spacing:-0.4px;">14:30</div>
<div class="r" style="left:-1px;top:234px;width:336px;height:20px;background:#dff9e2;"></div>
<div class="t" style="left:131.7px;top:235.24px;font-size:14px;color:#34344a;font-weight:normal;letter-spacing:-0.4px;">15:00</div>
<div class="r" style="left:-1px;top:254px;width:336px;height:20px;background:#d9efff;"></div>
<div class="t" style="left:131.7px;top:255.24px;font-size:14px;color:#34344a;font-weight:normal;letter-spacing:-0.4px;">15:30</div>
<div class="r" style="left:-1px;top:274px;width:336px;height:20px;background:#dff9e2;"></div>
<div class="t" style="left:131.7px;top:275.24px;font-size:14px;color:#34344a;font-weight:normal;letter-spacing:-0.4px;">16:00</div>
<div class="r" style="left:-1px;top:294px;width:336px;height:20px;background:#d9efff;"></div>
<div class="t" style="left:131.7px;top:295.24px;font-size:14px;color:#34344a;font-weight:normal;letter-spacing:-0.4px;">16:30</div>
<div class="r" style="left:-1px;top:314px;width:336px;height:20px;background:#dff9e2;"></div>
<div class="t" style="left:131.7px;top:315.24px;font-size:14px;color:#34344a;font-weight:normal;letter-spacing:-0.4px;">17:00</div>
<div class="r" style="left:-1px;top:334px;width:336px;height:20px;background:#d9efff;"></div>
<div class="t" style="left:131.7px;top:335.24px;font-size:14px;color:#34344a;font-weight:normal;letter-spacing:-0.4px;">17:30</div>
<div class="r" style="left:-1px;top:354px;width:336px;height:20px;background:#dff9e2;"></div>
<div class="t" style="left:131.7px;top:355.24px;font-size:14px;color:#34344a;font-weight:normal;letter-spacing:-0.4px;">18:00</div>
<div class="r" style="left:-1px;top:374px;width:336px;height:20px;background:#d9efff;"></div>
<div class="t" style="left:131.7px;top:375.24px;font-size:14px;color:#34344a;font-weight:normal;letter-spacing:-0.4px;">18:30</div>
<div class="r" style="left:-1px;top:394px;width:336px;height:20px;background:#dff9e2;"></div>
<div class="t" style="left:131.7px;top:395.24px;font-size:14px;color:#34344a;font-weight:normal;letter-spacing:-0.4px;">19:00</div>
<div class="r" style="left:-1px;top:414px;width:336px;height:20px;background:#d9efff;"></div>
<div class="t" style="left:131.7px;top:415.24px;font-size:14px;color:#34344a;font-weight:normal;letter-spacing:-0.4px;">19:30</div>
<div class="r" style="left:-1px;top:434px;width:336px;height:34px;background:#dff9e2;"></div>
<div class="r" style="left:32px;top:434px;width:303px;height:34px;background:#0580c3;"></div>
<svg class="s" style="left:7px;top:442px;" width="17" height="17" viewBox="0 0 17 17"><circle cx="8.5" cy="8.5" r="7.8" fill="none" stroke="#555" stroke-width="1.3"/><path d="M5.3 5.3 L11.5 11.5 M11.7 7.5 L11.7 11.7 L7.5 11.7" fill="none" stroke="#555" stroke-width="1.6"/></svg>
<div class="t" style="left:33.9px;top:435.94px;font-size:14px;color:#eef4fa;font-weight:normal;letter-spacing:-0.22px;">23.08.2024</div>
<div class="t" style="left:234.6px;top:435.94px;font-size:14px;color:#eef4fa;font-weight:normal;letter-spacing:-0.2px;">Piektdiena</div>
<div class="r" style="left:-1px;top:468px;width:336px;height:20px;background:#d9efff;"></div>
<div class="t" style="left:131.7px;top:469.24px;font-size:14px;color:#34344a;font-weight:normal;letter-spacing:-0.4px;">10:00</div>
<div class="r" style="left:-1px;top:488px;width:336px;height:20px;background:#dff9e2;"></div>
<div class="t" style="left:131.7px;top:489.24px;font-size:14px;color:#34344a;font-weight:normal;letter-spacing:-0.4px;">10:30</div>
<div class="r" style="left:-1px;top:508px;width:336px;height:20px;background:#d9efff;"></div>
<div class="t" style="left:131.7px;top:509.24px;font-size:14px;color:#34344a;font-weight:normal;letter-spacing:-0.4px;">11:00</div>
<div class="r" style="left:-1px;top:528px;width:336px;height:20px;background:#dff9e2;"></div>
<div class="t" style="left:131.7px;top:529.24px;font-size:14px;color:#34344a;font-weight:normal;letter-spacing:-0.4px;">11:30</div>
<div class="r" style="left:-1px;top:548px;width:336px;height:20px;background:#d9efff;"></div>
<div class="t" style="left:131.7px;top:549.24px;font-size:14px;color:#34344a;font-weight:normal;letter-spacing:-0.4px;">12:00</div>
<div class="r" style="left:-1px;top:568px;width:336px;height:20px;background:#dff9e2;"></div>
<div class="t" style="left:131.7px;top:569.24px;font-size:14px;color:#34344a;font-weight:normal;letter-spacing:-0.4px;">12:30</div>
<div class="r" style="left:-1px;top:588px;width:336px;height:20px;background:#d9efff;"></div>
<div class="t" style="left:131.7px;top:589.24px;font-size:14px;color:#34344a;font-weight:normal;letter-spacing:-0.4px;">13:00</div>
<div class="r" style="left:-1px;top:608px;width:336px;height:20px;background:#dff9e2;"></div>
<div class="t" style="left:131.7px;top:609.24px;font-size:14px;color:#34344a;font-weight:normal;letter-spacing:-0.4px;">13:30</div>
<div class="r" style="left:-1px;top:628px;width:336px;height:20px;background:#d9efff;"></div>
<div class="t" style="left:131.7px;top:629.24px;font-size:14px;color:#34344a;font-weight:normal;letter-spacing:-0.4px;">14:00</div>
</div></div>
<div class="r" style="left:1143px;top:874px;width:360px;height:1px;background:#c8c8c8;"></div>
<div class="r" style="left:1480px;top:167px;width:1px;height:707px;background:#c3c3c3;"></div>
<div class="r" style="left:1481px;top:167px;width:21px;height:707px;background:#fff;"></div>
<svg class="s" style="left:1487px;top:175px;" width="8" height="4" viewBox="0 0 8 4"><path d="M0 4 L4 0 L8 4 Z" fill="#6a6a6a"/></svg>
<div class="r" style="left:1486px;top:188px;width:10px;height:489px;background:#b9b9b9;"></div>
<svg class="s" style="left:1487px;top:862px;" width="8" height="4" viewBox="0 0 8 4"><path d="M0 0 L4 4 L8 0 Z" fill="#6a6a6a"/></svg>
<div class="r" style="left:28px;top:164px;width:24px;height:134px;background:#f6f6f6;border:1px solid #c8c8c8;"></div>
<div class="r" style="left:28px;top:307px;width:24px;height:143px;background:#f6f6f6;border:1px solid #c8c8c8;"></div>
<svg class="s" style="left:29px;top:171px;" width="18" height="14" viewBox="0 0 18 14"><path d="M0 1.5 Q0 0 1.5 0 H6.5 L8.5 2 H18 V4 H0 Z" fill="#757575"/><rect x="0" y="3.5" width="18" height="10.5" fill="#fdbf5a"/></svg>
<svg class="s" style="left:30px;top:311px;" width="18" height="18" viewBox="0 0 18 18"><g transform="scale(1.0)"><path d="M0.8 14.5 Q1.5 10.5 6.5 10 H11.5 Q16.5 10.5 17.2 14.5 Q17.5 17.5 14 17.5 H4 Q0.5 17.5 0.8 14.5 Z" fill="#8cc64a" stroke="#5a8c2a" stroke-width="0.8"/><path d="M4.6 6 Q4.4 0.8 9 0.8 Q13.6 0.8 13.4 6 Q13.2 10.8 11 11.8 H7 Q4.8 10.8 4.6 6 Z" fill="#b8703c"/><path d="M6.3 5.5 Q7.5 4 11.7 4.3 Q11.9 9.5 9 11.2 Q6.2 9.8 6.3 5.5 Z" fill="#f8dab4"/></g></svg>
<div class="t" style="left:39px;top:196.5px;font-size:13.5px;color:#4a4a68;transform-origin:0 0;transform:rotate(90deg) translate(0,-7px);">Lietotāja izvēlne</div>
<div class="t" style="left:39px;top:332px;font-size:13.7px;color:#4a4a68;transform-origin:0 0;transform:rotate(90deg) translate(0,-7px);">Tehniskā palīdzība</div>
<div class="r" style="left:59px;top:160px;width:336px;height:741px;border:1px solid #c6c6c6;background:#fff;"></div>
<div class="r" style="left:60px;top:900px;width:336px;height:2px;background:#e9e9e9;"></div>
<div class="r" style="left:60px;top:200px;width:336px;height:1px;background:#c6c6c6;"></div>
<svg class="s" style="left:64px;top:174px;" width="17" height="14" viewBox="0 0 17 14"><path d="M0 1.5 Q0 0 1.5 0 H6.5 L8.5 2 H17 V4 H0 Z" fill="#757575"/><rect x="0" y="3.5" width="17" height="10.5" fill="#fdbf5a"/></svg>
<div class="t" style="left:89px;top:174.46px;font-size:14.8px;color:#a6aebd;font-weight:bold;-webkit-text-stroke:0;">Darbinieku saraksts</div>
<svg class="s" style="left:372px;top:176px;" width="10" height="11" viewBox="0 0 10 11"><path d="M2.5 0.5 H7.5 V6 H9.5 V7.5 H0.5 V6 H2.5 Z" fill="#8a8a8a"/><rect x="4.5" y="7" width="1.2" height="4" fill="#8a8a8a"/><rect x="5.2" y="1" width="1" height="5" fill="#c8c8c8"/></svg>
<div class="t" style="left:64.5px;top:212.84px;font-size:14px;color:#3a3a55;font-weight:normal;letter-spacing:-0.59px;">Periods</div>
<div class="r" style="left:116px;top:209px;width:93px;height:22px;border:1px solid #cfcfcf;background:#fff;"></div>
<div class="r" style="left:118px;top:210px;width:58px;height:22px;overflow:hidden;"><div class="t" style="left:0.5px;top:3.07px;font-size:13.5px;color:#333;">22.08.202</div></div>
<svg class="s" style="left:190px;top:218px;" width="9" height="5" viewBox="0 0 9 5"><path d="M0 0 H9 L4.5 5 Z" fill="#555"/></svg>
<div class="r" style="left:221px;top:209px;width:93px;height:22px;border:1px solid #cfcfcf;background:#fff;"></div>
<div class="r" style="left:223px;top:210px;width:58px;height:22px;overflow:hidden;"><div class="t" style="left:0.5px;top:3.07px;font-size:13.5px;color:#333;">23.08.202</div></div>
<svg class="s" style="left:295px;top:218px;" width="9" height="5" viewBox="0 0 9 5"><path d="M0 0 H9 L4.5 5 Z" fill="#555"/></svg>
<div class="t" style="left:212.5px;top:213.49px;font-size:13px;color:#333;font-weight:normal;">-</div>
<div class="r" style="left:316px;top:205px;width:45px;height:29px;border:1px solid #d6d6d6;border-radius:3px;background:linear-gradient(#f7f7f7,#e9e9e9);"></div>
<div class="r" style="left:344px;top:206px;width:1px;height:29px;background:#d8d8d8;"></div>
<svg class="s" style="left:319px;top:207px;" width="22" height="23" viewBox="0 0 22 23"><defs><radialGradient id="mg" cx="0.4" cy="0.35" r="0.7"><stop offset="0" stop-color="#e6f4ff"/><stop offset="0.5" stop-color="#8cc8f5"/><stop offset="1" stop-color="#3a7fd0"/></radialGradient></defs><path d="M11.5 14 L18.5 21" stroke="#d39b1c" stroke-width="3.2" stroke-linecap="round"/><path d="M11.5 14 L18.5 21" stroke="#f5c33b" stroke-width="1.6" stroke-linecap="round"/><circle cx="7.5" cy="9" r="6.2" fill="url(#mg)" stroke="#5a7fb8" stroke-width="1"/></svg>
<svg class="s" style="left:349px;top:219px;" width="9" height="5" viewBox="0 0 9 5"><path d="M0 0 H9 L4.5 5 Z" fill="#555"/></svg>
<div class="r" style="left:364px;top:205px;width:31px;height:29px;border:1px solid #d6d6d6;border-right:none;border-radius:3px 0 0 3px;background:linear-gradient(#f7f7f7,#e9e9e9);"></div>
<svg class="s" style="left:370px;top:209px;" width="22" height="22" viewBox="0 0 22 22"><circle cx="11" cy="11" r="9.6" fill="#f4f9ff" stroke="#2f6fcf" stroke-width="2"/><circle cx="11" cy="11" r="7.8" fill="none" stroke="#9cc4f0" stroke-width="0.8"/><path d="M11 11 L16 5" stroke="#2f5fb8" stroke-width="1.3"/><path d="M11 11 L8 8.5" stroke="#e07050" stroke-width="1.3"/><path d="M11 11 L13 16" stroke="#f0a080" stroke-width="1"/></svg>
<div class="r" style="left:62px;top:243px;width:330px;height:654px;border:1px solid #cdcdcd;border-left:2px solid #bdbdbd;border-top:2px solid #bdbdbd;background:#fff;"></div>
<div class="r" style="left:64px;top:245px;width:330px;height:31px;background:#f5f5f5;"></div>
<div class="r" style="left:64px;top:276px;width:330px;height:1px;background:#c0c0c0;"></div>
<div class="r" style="left:64px;top:277px;width:330px;height:1px;background:#d0d4d8;"></div>
<div class="t" style="left:65.6px;top:254.44px;font-size:14px;color:#3a3a3a;font-weight:normal;letter-spacing:-0.5px;">Darbinieks</div>
<div class="r" style="left:64px;top:278px;width:330px;height:34px;background:#d9efff;"></div>
<div class="r" style="left:64px;top:312px;width:330px;height:34px;background:#dff9e2;"></div>
<div class="r" style="left:64px;top:346px;width:330px;height:34px;background:#d9efff;"></div>
<div class="r" style="left:64px;top:380px;width:330px;height:33px;background:#dff9e2;"></div>
<svg class="s" style="left:71px;top:286px;" width="17" height="17" viewBox="0 0 17 17"><circle cx="8.5" cy="8.5" r="7.8" fill="none" stroke="#4a4a4a" stroke-width="1.5"/><path d="M5.3 5.3 L11.5 11.5 M11.7 7.5 L11.7 11.7 L7.5 11.7" fill="none" stroke="#4a4a4a" stroke-width="1.8"/></svg>
<div class="r" style="left:89px;top:294px;width:12px;height:0;border-top:1px dotted #b0b0b0;"></div>
<div class="r" style="left:113px;top:305px;width:0;height:89px;border-left:1px dotted #b0b0b0;"></div>
<div class="r" style="left:114px;top:328px;width:16px;height:0;border-top:1px dotted #b0b0b0;"></div>
<div class="r" style="left:114px;top:362px;width:16px;height:0;border-top:1px dotted #b0b0b0;"></div>
<div class="r" style="left:114px;top:396px;width:16px;height:0;border-top:1px dotted #b0b0b0;"></div>
<svg class="s" style="left:102px;top:287px;" width="21" height="14" viewBox="0 0 21 14"><path d="M0 2 Q0 0.5 1.5 0.5 H6.5 L8 2.5 H18 V14 H0 Z" fill="#7a7a7a"/><path d="M2.5 5.5 H21 L18.5 14 H0 Z" fill="#fdbf5a"/></svg>
<div class="t" style="left:132px;top:288.04px;font-size:14px;color:#3a3a55;font-weight:normal;letter-spacing:-0.58px;">Galvenais</div>
<svg class="s" style="left:137px;top:318px;" width="19" height="19" viewBox="0 0 19 19"><g transform="scale(1.0555555555555556)"><path d="M0.8 14.5 Q1.5 10.5 6.5 10 H11.5 Q16.5 10.5 17.2 14.5 Q17.5 17.5 14 17.5 H4 Q0.5 17.5 0.8 14.5 Z" fill="#8cc64a" stroke="#5a8c2a" stroke-width="0.8"/><path d="M4.6 6 Q4.4 0.8 9 0.8 Q13.6 0.8 13.4 6 Q13.2 10.8 11 11.8 H7 Q4.8 10.8 4.6 6 Z" fill="#b8703c"/><path d="M6.3 5.5 Q7.5 4 11.7 4.3 Q11.9 9.5 9 11.2 Q6.2 9.8 6.3 5.5 Z" fill="#f8dab4"/></g></svg>
<div class="t" style="left:167.3px;top:321.94px;font-size:14px;color:#3a3a55;font-weight:normal;letter-spacing:-0.41px;">1. darbinieks</div>
<svg class="s" style="left:137px;top:352px;" width="19" height="19" viewBox="0 0 19 19"><g transform="scale(1.0555555555555556)"><path d="M0.8 14.5 Q1.5 10.5 6.5 10 H11.5 Q16.5 10.5 17.2 14.5 Q17.5 17.5 14 17.5 H4 Q0.5 17.5 0.8 14.5 Z" fill="#8cc64a" stroke="#5a8c2a" stroke-width="0.8"/><path d="M4.6 6 Q4.4 0.8 9 0.8 Q13.6 0.8 13.4 6 Q13.2 10.8 11 11.8 H7 Q4.8 10.8 4.6 6 Z" fill="#b8703c"/><path d="M6.3 5.5 Q7.5 4 11.7 4.3 Q11.9 9.5 9 11.2 Q6.2 9.8 6.3 5.5 Z" fill="#f8dab4"/></g></svg>
<div class="t" style="left:167.3px;top:355.94px;font-size:14px;color:#3a3a55;font-weight:normal;letter-spacing:-0.41px;">2. darbinieks</div>
<svg class="s" style="left:137px;top:386px;" width="19" height="19" viewBox="0 0 19 19"><g transform="scale(1.0555555555555556)"><path d="M0.8 14.5 Q1.5 10.5 6.5 10 H11.5 Q16.5 10.5 17.2 14.5 Q17.5 17.5 14 17.5 H4 Q0.5 17.5 0.8 14.5 Z" fill="#8cc64a" stroke="#5a8c2a" stroke-width="0.8"/><path d="M4.6 6 Q4.4 0.8 9 0.8 Q13.6 0.8 13.4 6 Q13.2 10.8 11 11.8 H7 Q4.8 10.8 4.6 6 Z" fill="#b8703c"/><path d="M6.3 5.5 Q7.5 4 11.7 4.3 Q11.9 9.5 9 11.2 Q6.2 9.8 6.3 5.5 Z" fill="#f8dab4"/></g></svg>
<div class="t" style="left:167.3px;top:389.94px;font-size:14px;color:#3a3a55;font-weight:normal;letter-spacing:-0.41px;">3. darbinieks</div>
<div class="r" style="left:22px;top:906px;width:1491px;height:3px;border:1px solid #cdcdcd;border-left:none;background:#fff;"></div>
<div class="r" style="left:22px;top:906px;width:180px;height:55px;border:1px solid #c8c8c8;border-bottom:none;background:#fff;"></div>
<div class="r" style="left:22px;top:959px;width:182px;height:3px;background:#0aa0f5;"></div>
<svg class="s" style="left:40px;top:921px;" width="31" height="27" viewBox="0 0 31 27"><defs><linearGradient id="wg" x1="0" y1="0" x2="0" y2="1"><stop offset="0" stop-color="#f4f7fc"/><stop offset="1" stop-color="#dfe6f2"/></linearGradient><linearGradient id="wt" x1="0" y1="0" x2="1" y2="0"><stop offset="0" stop-color="#6aa6e6"/><stop offset="1" stop-color="#4a86d0"/></linearGradient></defs><rect x="0.8" y="0.8" width="29.4" height="25.4" rx="2" fill="url(#wg)" stroke="#5a7fc0" stroke-width="1.4"/><rect x="1.5" y="1.5" width="28" height="5.5" fill="url(#wt)"/><circle cx="25.5" cy="4" r="1.4" fill="#e8302a"/></svg>
<div class="t" style="left:82px;top:928.03px;font-size:13.3px;color:#1e90e0;font-weight:normal;">Reģistrācija</div>
<svg class="s" style="left:171px;top:929px;" width="12" height="10" viewBox="0 0 12 10"><path d="M1.5 1 L10.5 9 M10.5 1 L1.5 9" stroke="#1e90e0" stroke-width="2"/></svg>
<svg class="s" style="left:29px;top:964px;" width="20" height="20" viewBox="0 0 20 20"><circle cx="10" cy="10" r="9.8" fill="#3f7ec3"/><rect x="8.5" y="4.2" width="3" height="2.8" fill="#fff"/><rect x="8.5" y="8.4" width="3" height="7.6" fill="#fff"/></svg>
<div class="t" style="left:70.2px;top:968.74px;font-size:14px;color:#484852;font-weight:normal;letter-spacing:-0.14px;">7.2.9044.10 Standard</div>
<div class="r" style="left:229px;top:966px;width:1px;height:18px;background:#c0c0c0;"></div>
<div class="r" style="left:399px;top:966px;width:1px;height:18px;background:#c0c0c0;"></div>
<div class="r" style="left:578px;top:966px;width:1px;height:18px;background:#c0c0c0;"></div>
<div class="r" style="left:727px;top:966px;width:1px;height:18px;background:#c0c0c0;"></div>
<div class="r" style="left:876px;top:966px;width:1px;height:18px;background:#c0c0c0;"></div>
<div class="r" style="left:1484px;top:966px;width:1px;height:18px;background:#c0c0c0;"></div>
<svg class="s" style="left:243px;top:963px;" width="17" height="21" viewBox="0 0 17 21"><defs><linearGradient id="dbg" x1="0" y1="0" x2="1" y2="0"><stop offset="0" stop-color="#fff6d8"/><stop offset="0.45" stop-color="#f4cc60"/><stop offset="1" stop-color="#d8801c"/></linearGradient></defs><rect x="0.8" y="1" width="15.4" height="19" rx="2.5" fill="url(#dbg)" stroke="#c88a3a" stroke-width="1"/><path d="M2 9 H15 M2 14.5 H15" stroke="#c06a18" stroke-width="1" opacity="0.8"/></svg>
<div class="t" style="left:282px;top:968.74px;font-size:14px;color:#484852;font-weight:normal;letter-spacing:-0.08px;">localhost (utf8)</div>
<svg class="s" style="left:412px;top:965px;" width="18" height="18" viewBox="0 0 18 18"><g transform="scale(1.0)"><path d="M0.8 14.5 Q1.5 10.5 6.5 10 H11.5 Q16.5 10.5 17.2 14.5 Q17.5 17.5 14 17.5 H4 Q0.5 17.5 0.8 14.5 Z" fill="#8cc64a" stroke="#5a8c2a" stroke-width="0.8"/><path d="M4.6 6 Q4.4 0.8 9 0.8 Q13.6 0.8 13.4 6 Q13.2 10.8 11 11.8 H7 Q4.8 10.8 4.6 6 Z" fill="#b8703c"/><path d="M6.3 5.5 Q7.5 4 11.7 4.3 Q11.9 9.5 9 11.2 Q6.2 9.8 6.3 5.5 Z" fill="#f8dab4"/></g></svg>
<div class="t" style="left:451px;top:968.74px;font-size:14px;color:#484852;font-weight:normal;letter-spacing:-0.56px;">NIKOLAY (MAIN)</div>
<svg class="s" style="left:591px;top:965px;" width="18" height="18" viewBox="0 0 18 18"><rect x="0.5" y="0.5" width="17" height="17" rx="1" fill="#f4f8fe" stroke="#7a8ed0" stroke-width="1"/><rect x="0.5" y="0.5" width="17" height="5.3" fill="#e8604a"/><text x="9" y="15.2" text-anchor="middle" font-family="Liberation Sans" font-weight="bold" font-size="10.5" fill="#3a4a6a" textLength="11.5" lengthAdjust="spacingAndGlyphs">31</text></svg>
<div class="t" style="left:631px;top:968.74px;font-size:14px;color:#484852;font-weight:normal;">22.08.2024</div>
<div class="t" style="left:762.5px;top:968.74px;font-size:14px;color:#484852;font-weight:normal;">12:38:21:440</div>
<svg class="s" style="left:1508px;top:970px;" width="4" height="4" viewBox="0 0 4 4"><path d="M2 0.3 L3.7 2 L2 3.7 L0.3 2 Z" fill="#6e6e6e"/></svg>
<svg class="s" style="left:1503px;top:975px;" width="4" height="4" viewBox="0 0 4 4"><path d="M2 0.3 L3.7 2 L2 3.7 L0.3 2 Z" fill="#6e6e6e"/></svg>
<svg class="s" style="left:1508px;top:975px;" width="4" height="4" viewBox="0 0 4 4"><path d="M2 0.3 L3.7 2 L2 3.7 L0.3 2 Z" fill="#6e6e6e"/></svg>
<svg class="s" style="left:1498px;top:980px;" width="4" height="4" viewBox="0 0 4 4"><path d="M2 0.3 L3.7 2 L2 3.7 L0.3 2 Z" fill="#6e6e6e"/></svg>
<svg class="s" style="left:1503px;top:980px;" width="4" height="4" viewBox="0 0 4 4"><path d="M2 0.3 L3.7 2 L2 3.7 L0.3 2 Z" fill="#6e6e6e"/></svg>
<svg class="s" style="left:1508px;top:980px;" width="4" height="4" viewBox="0 0 4 4"><path d="M2 0.3 L3.7 2 L2 3.7 L0.3 2 Z" fill="#6e6e6e"/></svg>
</body></html>
